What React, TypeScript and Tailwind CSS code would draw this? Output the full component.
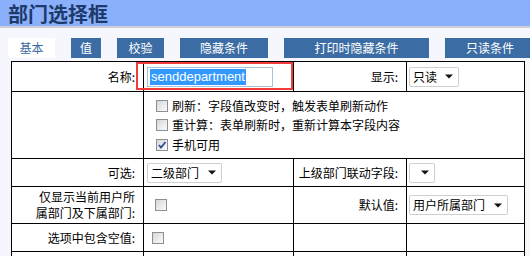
import React from "react";

const CJK = { fontFamily: '"Noto Sans CJK SC", "Liberation Sans", sans-serif' };

const tabs = [
  { label: "基本", w: "w-[47px]", active: true },
  { label: "值", w: "w-[30px]" },
  { label: "校验", w: "w-[47px]" },
  { label: "隐藏条件", w: "w-[88px]" },
  { label: "打印时隐藏条件", w: "w-[145px]" },
  { label: "只读条件", w: "w-[90px]" },
];

const Arrow = () => (
  <svg width="8" height="5" viewBox="0 0 8 5" className="shrink-0">
    <path d="M0 0.5h8L4 4.5z" fill="#111" />
  </svg>
);

const Select = ({ text, w, className = "" }: { text: string; w: string; className?: string }) => (
  <div
    className={`flex h-[20px] ${w} items-center justify-between rounded-[2px] border border-[#cfcfcf] bg-white pl-[3px] pr-[5px] text-[12px] text-black ${className}`}
  >
    <span className="leading-none">{text}</span>
    <Arrow />
  </div>
);

const Check = ({ checked = false }: { checked?: boolean }) => (
  <span className="relative inline-block h-[12px] w-[12px] shrink-0 border border-[#8d8f91] bg-gradient-to-br from-[#d6d7d9] to-[#fbfbfb]">
    {checked && (
      <svg width="10" height="10" viewBox="0 0 10 10" className="absolute left-0 top-0">
        <path d="M2 5l2 2.5L8.5 2" stroke="#2a4c9c" strokeWidth="1.8" fill="none" />
      </svg>
    )}
  </span>
);

const Label = ({ children }: { children: React.ReactNode }) => (
  <div className="flex items-center justify-end bg-white pr-2 text-right text-[12px] leading-[16px] text-black">
    {children}
  </div>
);

const Cell = ({ children, className = "" }: { children?: React.ReactNode; className?: string }) => (
  <div className={`flex items-center bg-white ${className}`}>{children}</div>
);

export default function App() {
  return (
    <div className="relative h-[256px] w-[530px] overflow-hidden bg-[#f6f7fc]" style={CJK}>
      {/* title bar */}
      <div className="flex h-[28px] items-center border-b-2 border-[#cdd0d6] bg-[#8ab0fb] pl-2 pt-[2px]">
        <h1 className="text-[20px] font-bold leading-[26px] text-[#1e3a6b]">部门选择框</h1>
      </div>

      {/* tabs */}
      <div className="mt-[10px] flex gap-4 pl-2">
        {tabs.map((t) => (
          <div
            key={t.label}
            className={`flex h-[20px] shrink-0 items-center justify-center text-[12px] ${t.w} ${
              t.active ? "bg-white text-[#3b6da4]" : "bg-[#3b6da4] text-white"
            }`}
          >
            {t.label}
          </div>
        ))}
      </div>

      {/* form table */}
      <div className="ml-[11px] mt-[3px] grid w-[514px] grid-cols-[131px_149px_112px_117px] grid-rows-[29px_66px_27px_36px_27px_30px] gap-px bg-black p-px">
        <Label>名称:</Label>
        <Cell className="pl-[3px]">
          <div className="flex h-[20px] w-[126px] items-center border border-[#a9c1d9] bg-white pl-[2px]">
            <span
              className="bg-[#3399ff] px-px text-[13px] leading-[16px] text-white"
              style={{ fontFamily: '"Liberation Sans", sans-serif' }}
            >
              senddepartment
            </span>
          </div>
        </Cell>
        <Label>显示:</Label>
        <Cell className="pl-[2px]">
          <Select text="只读" w="w-[50px]" />
        </Cell>

        <Cell />
        <div className="col-span-3 flex flex-col bg-white pl-[12px] pt-[4px] text-[12px] text-black">
          <div className="flex h-[19px] items-center gap-[4px]">
            <Check />
            <span>刷新：字段值改变时，触发表单刷新动作</span>
          </div>
          <div className="flex h-[20px] items-center gap-[4px]">
            <Check />
            <span>重计算：表单刷新时，重新计算本字段内容</span>
          </div>
          <div className="flex h-[19px] items-center gap-[4px]">
            <Check checked />
            <span>手机可用</span>
          </div>
        </div>

        <Label>可选:</Label>
        <Cell className="pl-[3px]">
          <Select text="二级部门" w="w-[75px]" />
        </Cell>
        <Label>上级部门联动字段:</Label>
        <Cell className="pl-[2px]">
          <Select text="" w="w-[26px]" />
        </Cell>

        <Label>
          仅显示当前用户所
          <br />
          属部门及下属部门:
        </Label>
        <Cell className="pl-[11px]">
          <Check />
        </Cell>
        <Label>默认值:</Label>
        <Cell className="pl-[2px]">
          <Select text="用户所属部门" w="w-[99px]" />
        </Cell>

        <Label>选项中包含空值:</Label>
        <Cell className="pl-[8px]">
          <Check />
        </Cell>
        <Cell />
        <Cell />

        <Cell />
        <Cell />
        <Cell />
        <Cell />
      </div>

      {/* highlight annotation */}
      <div className="pointer-events-none absolute left-[136px] top-[62px] h-[28px] w-[157px] border-2 border-[#f23c3c]" />
    </div>
  );
}
